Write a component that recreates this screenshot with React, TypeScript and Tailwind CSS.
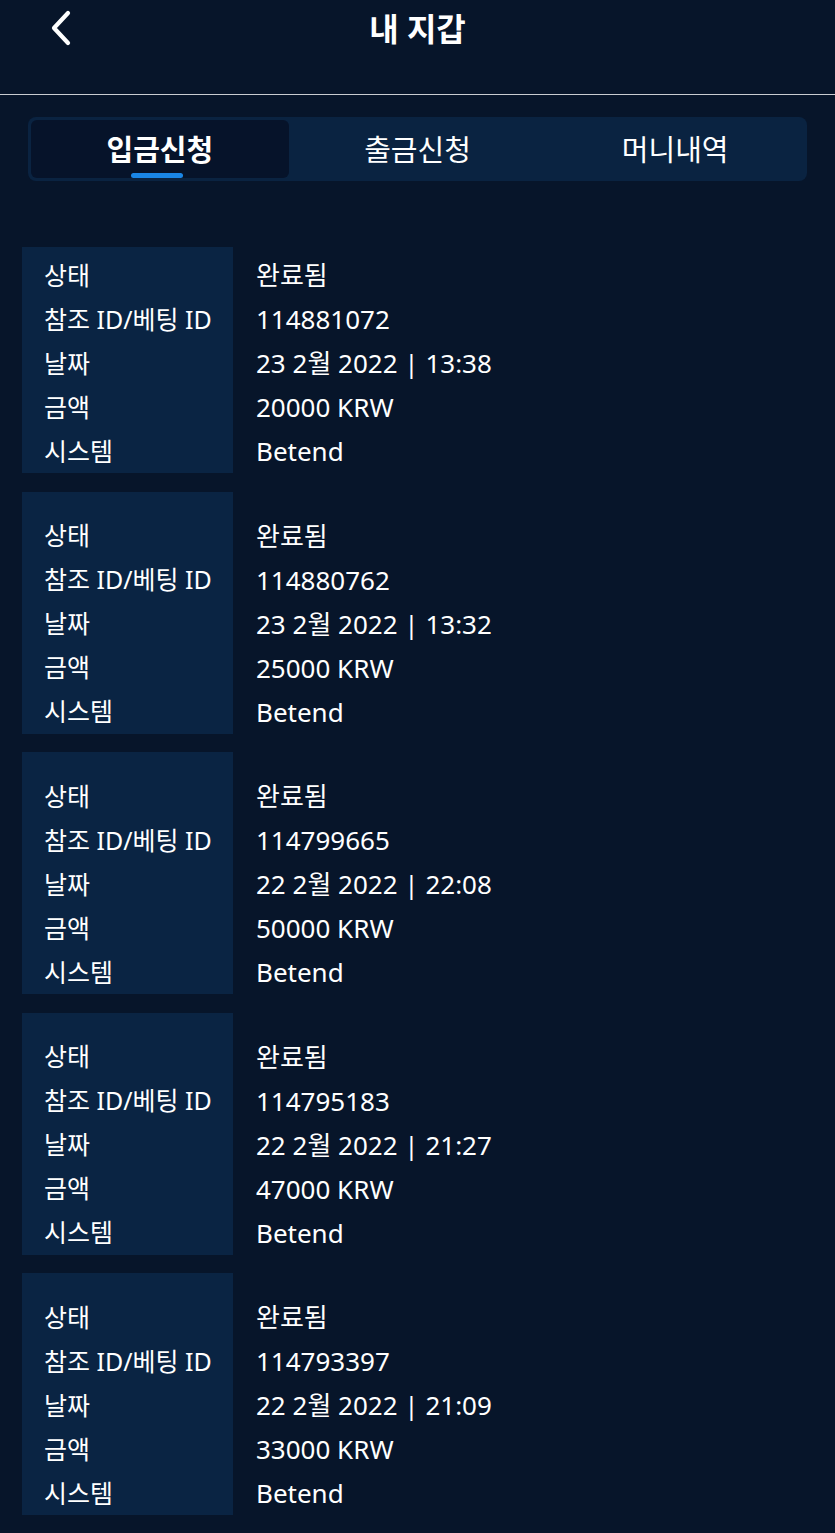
import React from "react";

const records = [
  { id: "114881072", date: "23 2월 2022 | 13:38", amount: "20000 KRW" },
  { id: "114880762", date: "23 2월 2022 | 13:32", amount: "25000 KRW" },
  { id: "114799665", date: "22 2월 2022 | 22:08", amount: "50000 KRW" },
  { id: "114795183", date: "22 2월 2022 | 21:27", amount: "47000 KRW" },
  { id: "114793397", date: "22 2월 2022 | 21:09", amount: "33000 KRW" },
];

export default function App() {
  return (
    <div
      className="min-h-[1533px] w-full bg-[#07152a] text-white"
      style={{ fontFamily: '"Noto Sans", "Noto Sans CJK KR", sans-serif' }}
    >
      <header className="relative flex h-[95px] items-start justify-center border-b border-[#c9ccd1]">
        <button className="absolute left-[46px] top-[10px] flex h-[36px] w-[30px] items-center justify-center">
          <svg width="26" height="36" viewBox="0 0 26 36" fill="none">
            <polyline points="20,3 6,18 20,33" stroke="white" strokeWidth="4.2" strokeLinecap="round" strokeLinejoin="round" />
          </svg>
        </button>
        <h1 className="mt-[8px] text-[32px] font-bold leading-[42px]">내 지갑</h1>
      </header>

      <div className="px-[28px] pt-[22px]">
        <div className="grid h-[64px] grid-cols-3 rounded-[8px] bg-[#0a2341] p-[3px]">
          <div className="relative flex items-center justify-center rounded-[6px] bg-[#06132a]">
            <span className="text-[29px] font-bold leading-none">입금신청</span>
            <span className="absolute bottom-[0px] left-1/2 h-[5px] w-[52px] -translate-x-[29px] rounded-full bg-[#1a86e6]" />
          </div>
          <div className="flex items-center justify-center">
            <span className="text-[29px] leading-none">출금신청</span>
          </div>
          <div className="flex items-center justify-center">
            <span className="text-[29px] leading-none">머니내역</span>
          </div>
        </div>
      </div>

      <div className="flex flex-col gap-[18.5px] pl-[22px] pt-[66px]">
        {records.map((r, i) => (
          <div key={r.id} className="flex">
            <div className={`w-[211px] bg-[#0a2443] pl-[22px] ${i === 0 ? "pt-[6px]" : "pt-[22px]"}`}>
              {["상태", "참조 ID/베팅 ID", "날짜", "금액", "시스템"].map((l) => (
                <div key={l} className="flex h-[44px] items-center whitespace-nowrap text-[25px] leading-none">
                  {l}
                </div>
              ))}
            </div>
            <div className={`pl-[23px] ${i === 0 ? "pt-[6px]" : "pt-[22px]"}`}>
              {["완료됨", r.id, r.date, r.amount, "Betend"].map((v, k) => (
                <div key={k} className="flex h-[44px] items-center whitespace-nowrap text-[26px] leading-none">
                  {v}
                </div>
              ))}
            </div>
          </div>
        ))}
      </div>
    </div>
  );
}
